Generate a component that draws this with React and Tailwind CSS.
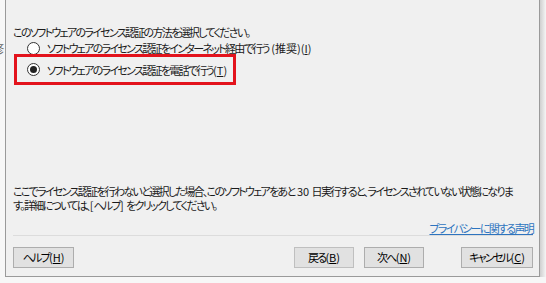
// latin runs keep normal spacing inside the tightened japanese text
function L({ children, u }) {
  return <span className={`tracking-normal ${u ? "underline" : ""}`}>{children}</span>;
}

export default function App() {
  const jp = "font-['Meiryo_UI','Noto_Sans_CJK_JP',sans-serif] [font-feature-settings:'palt']";
  const btn =
    "h-[21px] border border-[#adadad] bg-[#e1e1e1] leading-none text-black flex items-center justify-center whitespace-nowrap";

  return (
    <div className={`w-[546px] h-[283px] bg-[#f7f7f7] flex overflow-hidden ${jp}`}>
      {/* window behind, cut off */}
      <div className="w-[5px] h-[277px] overflow-hidden relative">
        <span className="absolute left-[-8px] top-[40px] text-[12px] text-[#666]">修</span>
      </div>

      {/* dialog */}
      <div className="w-[535px] h-[277px] bg-[#f0f0f0] border-l border-r border-b border-[#9a9a9a] flex flex-col pl-[7px] pr-[6px] text-[11px] tracking-[-1.7px] text-[#1a1a1a] whitespace-nowrap">
        <div className="mt-[24px] leading-[16px]">このソフトウェアのライセンス認証の方法を選択してください。</div>

        <label className="ml-[14px] h-[16px] flex items-center gap-[7px] leading-[16px]">
          <span className="w-[13px] h-[13px] rounded-full border border-[#333] bg-white shrink-0" />
          <span>
            ソフトウェアのライセンス認証をインターネット経由で行う
            <span className="tracking-normal">
              {" "}(推奨)(<span className="underline">I</span>)
            </span>
          </span>
        </label>

        <div className="-mt-[2px] ml-[1px] w-[222px] h-[31px] border-[3px] border-[#e3131c] flex items-center pl-[10px] gap-[7px]">
          <span className="w-[13px] h-[13px] rounded-full border border-[#333] bg-white shrink-0 flex items-center justify-center">
            <span className="w-[7px] h-[7px] rounded-full bg-[#222]" />
          </span>
          <span className="leading-[16px]">
            ソフトウェアのライセンス認証を電話で行う<L>(</L><L u>T</L><L>)</L>
          </span>
        </div>

        <p className="mt-[99px] leading-[14px]">
          ここでライセンス認証を行わないと選択した場合、このソフトウェアをあと<L> 30 </L>日実行すると、ライセンスされていない状態になりま
          <br />
          す。詳細については、<L>[</L>ヘルプ<L>] </L>をクリックしてください。
        </p>

        <div className="flex justify-end mt-[10px]">
          <a className="text-[#2e74bf] underline leading-[12px]">プライバシーに関する声明</a>
        </div>

        <div className="h-px bg-[#dcdcdc] mt-[1px]" />

        <div className="flex items-center mt-[11px]">
          <button className={`${btn} w-[61px]`}>
            ヘルプ<L>(</L><L u>H</L><L>)</L>
          </button>
          <button className={`${btn} w-[60px] ml-auto bg-[#cccccc] border-[#bfbfbf] text-[#9d9d9d]`}>
            戻る<L>(</L><L u>B</L><L>)</L>
          </button>
          <button className={`${btn} w-[60px] ml-[10px] border-[#0078d7]`}>
            次へ<L>(</L><L u>N</L><L>)</L>
          </button>
          <button className={`${btn} w-[72px] ml-[37px]`}>
            キャンセル<L>(</L><L u>C</L><L>)</L>
          </button>
        </div>
      </div>

      {/* drop shadow */}
      <div className="w-[6px] h-[277px] bg-gradient-to-r from-[#cfcfcf] to-[#f5f5f5]" />
    </div>
  );
}
